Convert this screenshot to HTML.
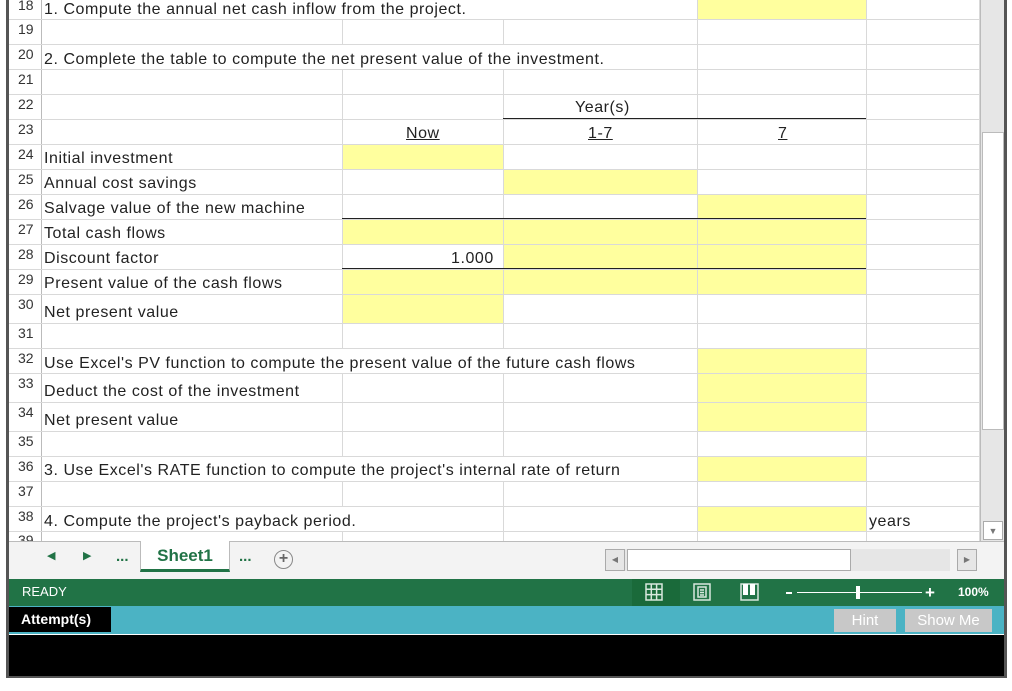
<!DOCTYPE html>
<html><head><meta charset="utf-8"><style>
*{margin:0;padding:0;box-sizing:border-box}
body{width:1012px;height:691px;background:#fff;position:relative;overflow:hidden;font-family:"Liberation Sans",sans-serif;color:#222}
div{position:absolute}
.h{left:9px;width:971px;height:1px;background:#d9d9d9}
.v{top:0;width:1px;height:541px;background:#d9d9d9}
.y{background:#ffff9e}
.n{left:18px;font-size:14px;color:#333}
.t{left:44px;font-size:16px;white-space:nowrap;letter-spacing:0.55px;margin-top:2px}
.bl{height:1px;background:#222}
</style></head><body>
<div class="y" style="left:697px;top:0;width:169px;height:19px"></div>
<div class="y" style="left:342px;top:144px;width:161px;height:25px"></div>
<div class="y" style="left:503px;top:169px;width:194px;height:25px"></div>
<div class="y" style="left:697px;top:194px;width:169px;height:25px"></div>
<div class="y" style="left:342px;top:219px;width:524px;height:25px"></div>
<div class="y" style="left:503px;top:244px;width:363px;height:25px"></div>
<div class="y" style="left:342px;top:269px;width:524px;height:25px"></div>
<div class="y" style="left:342px;top:294px;width:161px;height:29px"></div>
<div class="y" style="left:697px;top:348px;width:169px;height:83px"></div>
<div class="y" style="left:697px;top:456px;width:169px;height:25px"></div>
<div class="y" style="left:697px;top:506px;width:169px;height:25px"></div>
<div class="v" style="left:41px;background:#bbb"></div>
<div class="v" style="left:342px"></div><div class="v" style="left:503px"></div>
<div class="v" style="left:697px"></div><div class="v" style="left:866px"></div>
<div class="v" style="left:979px"></div>
<div class="h" style="top:19px"></div><div class="h" style="top:44px"></div><div class="h" style="top:69px"></div>
<div class="h" style="top:94px"></div><div class="h" style="top:119px"></div><div class="h" style="top:144px"></div>
<div class="h" style="top:169px"></div><div class="h" style="top:194px"></div><div class="h" style="top:219px"></div>
<div class="h" style="top:244px"></div><div class="h" style="top:269px"></div><div class="h" style="top:294px"></div>
<div class="h" style="top:323px"></div><div class="h" style="top:348px"></div><div class="h" style="top:373px"></div>
<div class="h" style="top:402px"></div><div class="h" style="top:431px"></div><div class="h" style="top:456px"></div>
<div class="h" style="top:481px"></div><div class="h" style="top:506px"></div><div class="h" style="top:531px"></div>
<div style="left:42px;top:0;width:655px;height:19px;background:#fff"></div>
<div style="left:42px;top:45px;width:655px;height:24px;background:#fff"></div>
<div style="left:42px;top:349px;width:655px;height:24px;background:#fff"></div>
<div style="left:42px;top:457px;width:655px;height:24px;background:#fff"></div>
<div style="left:42px;top:507px;width:461px;height:24px;background:#fff"></div>
<div class="bl" style="left:503px;top:118px;width:363px"></div>
<div class="bl" style="left:342px;top:218px;width:524px"></div>
<div class="bl" style="left:342px;top:268px;width:524px"></div>
<div class="n" style="top:-3px">18</div><div class="n" style="top:21px">19</div>
<div class="n" style="top:46px">20</div><div class="n" style="top:71px">21</div>
<div class="n" style="top:96px">22</div><div class="n" style="top:121px">23</div>
<div class="n" style="top:146px">24</div><div class="n" style="top:171px">25</div>
<div class="n" style="top:196px">26</div><div class="n" style="top:221px">27</div>
<div class="n" style="top:246px">28</div><div class="n" style="top:271px">29</div>
<div class="n" style="top:296px">30</div><div class="n" style="top:325px">31</div>
<div class="n" style="top:350px">32</div><div class="n" style="top:375px">33</div>
<div class="n" style="top:404px">34</div><div class="n" style="top:433px">35</div>
<div class="n" style="top:458px">36</div><div class="n" style="top:483px">37</div>
<div class="n" style="top:508px">38</div><div class="n" style="top:532px;height:9px;overflow:hidden">39</div>
<div class="t" style="top:-1px">1. Compute the annual net cash inflow from the project.</div>
<div class="t" style="top:49px">2. Complete the table to compute the net present value of the investment.</div>
<div class="t" style="top:148px">Initial investment</div>
<div class="t" style="top:173px">Annual cost savings</div>
<div class="t" style="top:198px">Salvage value of the new machine</div>
<div class="t" style="top:223px">Total cash flows</div>
<div class="t" style="top:248px">Discount factor</div>
<div class="t" style="top:273px">Present value of the cash flows</div>
<div class="t" style="top:302px">Net present value</div>
<div class="t" style="top:353px">Use Excel's PV function to compute the present value of the future cash flows</div>
<div class="t" style="top:381px">Deduct the cost of the investment</div>
<div class="t" style="top:410px">Net present value</div>
<div class="t" style="top:460px">3. Use Excel's RATE function to compute the project's internal rate of return</div>
<div class="t" style="top:511px">4. Compute the project's payback period.</div>
<div class="t" style="left:869px;top:511px">years</div>
<div class="t" style="left:575px;top:97px">Year(s)</div>
<div class="t" style="left:406px;top:123px;text-decoration:underline">Now</div>
<div class="t" style="left:588px;top:123px;text-decoration:underline">1-7</div>
<div class="t" style="left:778px;top:123px;text-decoration:underline">7</div>
<div class="t" style="left:451px;top:248px">1.000</div>
<div style="left:980px;top:0;width:24px;height:541px;background:#e6e6e6;border-left:1px solid #bbb"></div>
<div style="left:982px;top:132px;width:22px;height:298px;background:#fff;border:1px solid #bbb"></div>
<div style="left:983px;top:521px;width:20px;height:19px;background:#fff;border:1px solid #aaa;color:#777;font-size:9px;text-align:center;line-height:18px">▼</div>
<div style="left:9px;top:541px;width:995px;height:38px;background:#f3f3f3;border-top:1px solid #bbb"></div>
<div style="left:47px;top:549px;color:#217346;font-size:11px">◀</div>
<div style="left:83px;top:549px;color:#217346;font-size:11px">▶</div>
<div style="left:116px;top:548px;color:#217346;font-size:15px;font-weight:bold">...</div>
<div style="left:140px;top:541px;width:90px;height:31px;background:#fff;border-left:1px solid #bbb;border-right:1px solid #bbb;border-bottom:3px solid #217346;color:#217346;font-weight:bold;font-size:17px;text-align:center;line-height:30px">Sheet1</div>
<div style="left:239px;top:548px;color:#217346;font-size:15px;font-weight:bold">...</div>
<div style="left:274px;top:550px;width:19px;height:19px;border:1px solid #888;border-radius:50%;color:#666;font-size:16px;text-align:center;line-height:16px;font-weight:bold">+</div>
<div style="left:605px;top:549px;width:20px;height:22px;background:#e6e6e6;border:1px solid #aaa;font-size:8px;color:#777;text-align:center;line-height:20px">◀</div>
<div style="left:625px;top:549px;width:325px;height:22px;background:#e6e6e6"></div>
<div style="left:627px;top:549px;width:224px;height:22px;background:#fff;border:1px solid #aaa"></div>
<div style="left:957px;top:549px;width:20px;height:22px;background:#e6e6e6;border:1px solid #aaa;font-size:8px;color:#777;text-align:center;line-height:20px">▶</div>
<div style="left:9px;top:579px;width:995px;height:27px;background:#217346"></div>
<div style="left:22px;top:584px;color:#fff;font-size:13px">READY</div>
<div style="left:632px;top:579px;width:48px;height:27px;background:#1a6a3a"></div>
<svg style="position:absolute;left:645px;top:583px" width="18" height="18"><g fill="none" stroke="#d8e8dd" stroke-width="1.5"><rect x="1" y="1" width="16" height="16"/><path d="M1 6.3H17M1 11.6H17M6.3 1V17M11.6 1V17"/></g></svg>
<svg style="position:absolute;left:693px;top:583px" width="18" height="18"><g fill="none" stroke="#d8e8dd" stroke-width="1.5"><rect x="1" y="1" width="16" height="16"/><rect x="5" y="4" width="8" height="10"/><path d="M7 7H11M7 9.5H11M7 12H11"/></g></svg>
<svg style="position:absolute;left:740px;top:583px" width="20" height="18"><g fill="none" stroke="#d8e8dd" stroke-width="1.5"><rect x="1" y="1" width="17" height="16"/></g><rect x="3" y="1" width="5" height="11" fill="#fff"/><rect x="10" y="1" width="5" height="11" fill="#fff"/></svg>
<div style="left:786px;top:592px;width:6px;height:2px;background:#fff"></div>
<div style="left:797px;top:592px;width:125px;height:1px;background:#fff"></div>
<div style="left:856px;top:586px;width:4px;height:13px;background:#fff"></div>
<div style="left:925px;top:583px;color:#fff;font-size:17px;font-weight:bold">+</div>
<div style="left:958px;top:585px;color:#fff;font-size:12px;font-weight:bold">100%</div>
<div style="left:9px;top:606px;width:995px;height:28px;background:#4bb3c4"></div>
<div style="left:9px;top:607px;width:102px;height:25px;background:#000;color:#fff;font-weight:bold;font-size:14px;line-height:25px;padding-left:12px">Attempt(s)</div>
<div style="left:834px;top:609px;width:62px;height:23px;background:#c8c8c8;color:#fff;font-size:15px;text-align:center;line-height:23px">Hint</div>
<div style="left:905px;top:609px;width:87px;height:23px;background:#c8c8c8;color:#fff;font-size:15px;text-align:center;line-height:23px">Show Me</div>
<div style="left:9px;top:634px;width:995px;height:1px;background:#fff"></div>
<div style="left:9px;top:635px;width:995px;height:41px;background:#000"></div>
<div style="left:6px;top:0;width:3px;height:678px;background:#555"></div>
<div style="left:1004px;top:0;width:3px;height:678px;background:#555"></div>
<div style="left:6px;top:676px;width:1001px;height:2px;background:#555"></div>
</body></html>
